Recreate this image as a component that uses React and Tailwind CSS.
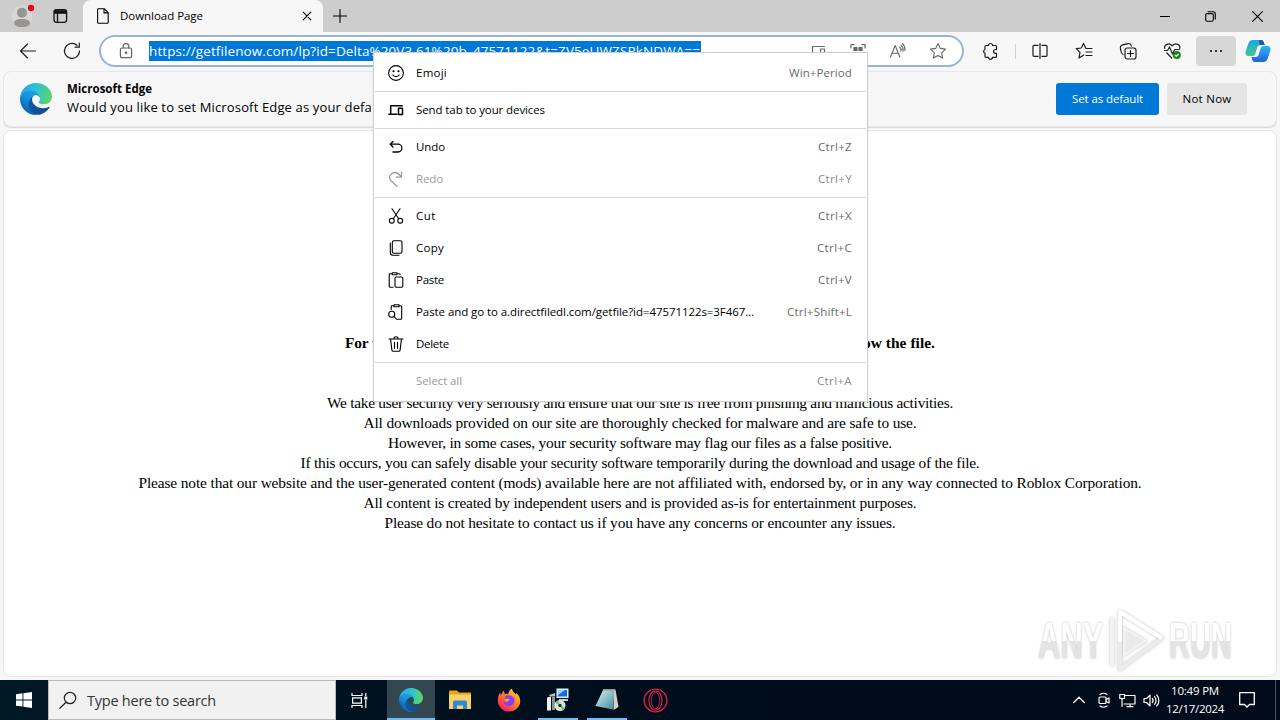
import React, { useLayoutEffect, useRef } from "react";

/* Text that is tracked so that it fills exactly `w` pixels. */
function Fit({ w, className = "", children }) {
  const ref = useRef(null);
  useLayoutEffect(() => {
    const el = ref.current;
    el.style.letterSpacing = "0px";
    const n = el.textContent.length;
    const natural = el.getBoundingClientRect().width;
    el.style.letterSpacing = `${(w - natural) / n}px`;
  }, [w]);
  return (
    <span ref={ref} className={`inline-block whitespace-pre ${className}`}>
      {children}
    </span>
  );
}

function Icon({ size = 16, sw = 1.1, className = "", children, box = 16 }) {
  return (
    <svg
      width={size}
      height={size}
      viewBox={`0 0 ${box} ${box}`}
      fill="none"
      stroke="currentColor"
      strokeWidth={sw}
      strokeLinecap="round"
      strokeLinejoin="round"
      className={`shrink-0 ${className}`}
    >
      {children}
    </svg>
  );
}

function EdgeLogo({ size, id }) {
  return (
    <svg width={size} height={size} viewBox="0 0 256 256" className="shrink-0">
      <defs>
        <linearGradient id={id + "a"} x1="60" y1="178" x2="235" y2="178" gradientUnits="userSpaceOnUse">
          <stop offset="0" stopColor="#0c59a4" />
          <stop offset="1" stopColor="#114a8b" />
        </linearGradient>
        <linearGradient id={id + "b"} x1="150" y1="100" x2="45" y2="230" gradientUnits="userSpaceOnUse">
          <stop offset="0" stopColor="#1b9de2" />
          <stop offset="0.4" stopColor="#1595df" />
          <stop offset="1" stopColor="#0f5fb0" />
        </linearGradient>
        <linearGradient id={id + "c"} x1="10" y1="60" x2="256" y2="110" gradientUnits="userSpaceOnUse">
          <stop offset="0" stopColor="#27a5e8" />
          <stop offset="0.45" stopColor="#2bc3d2" />
          <stop offset="1" stopColor="#62d65c" />
        </linearGradient>
      </defs>
      <path fill={`url(#${id}a)`} d="M231 190.500a93.700 93.700 0 0 1-10.500 4.700 101.900 101.900 0 0 1-35.900 6.500c-47.300 0-88.500-32.500-88.500-74.300a31.500 31.500 0 0 1 16.400-27.300c-42.800 1.800-53.800 46.400-53.800 72.500 0 73.900 68.100 81.400 82.800 81.400 7.900 0 19.800-2.300 27-4.600l1.300-.4a128.300 128.300 0 0 0 66.600-52.800 4 4 0 0 0-5.400-5.700z" />
      <path fill={`url(#${id}b)`} d="M105.700 241.400a79.200 79.200 0 0 1-22.700-21.300 80.700 80.700 0 0 1 29.500-120c3.100-1.500 8.500-4.100 15.600-4a32.400 32.400 0 0 1 25.700 13 31.900 31.900 0 0 1 6.300 18.700c0-.2 24.500-79.600-80-79.600-43.900 0-80 41.700-80 78.200a130.200 130.200 0 0 0 12.100 56 128 128 0 0 0 156.400 67 75.500 75.500 0 0 1-62.800-8z" />
      <path fill={`url(#${id}c)`} d="M152.300 148.900c-.8 1-3.300 2.500-3.300 5.700 0 2.600 1.700 5.100 4.700 7.200 14.400 10 41.500 8.700 41.600 8.700a59.600 59.600 0 0 0 30.300-8.300 61.400 61.400 0 0 0 30.400-52.900c.3-22.400-8-37.300-11.300-43.900C223.500 23.900 177.700 0 128 0A128 128 0 0 0 0 126.200c.5-36.500 36.800-66 80-66 3.500 0 23.500.3 42 10 16.300 8.600 24.900 19 30.800 29.200 6.200 10.700 7.300 24.100 7.300 29.500s-2.700 13.300-7.800 20z" />
    </svg>
  );
}

const UI = "font-['Open_Sans','Noto_Sans',sans-serif]";

function TitleBar() {
  return (
    <div className="flex h-8 shrink-0 bg-[#cdcdcd] text-black">
      <div className="flex w-[83px] items-center">
        <svg width="48" height="32" viewBox="0 0 48 32">
          <circle cx="22" cy="16" r="10.500" fill="#d8d6d5" />
          <circle cx="22" cy="12.800" r="5" fill="#979593" />
          <path d="M14 24c0-3.500 2-5 8-5s8 1.500 8 5c-2 2.500-5 3-8 3s-6-.5-8-3z" fill="#979593" />
          <circle cx="31" cy="8" r="3.200" fill="#e00b1c" />
        </svg>
        <svg width="24" height="32" viewBox="0 0 24 32" fill="none" stroke="#111" strokeWidth="1.300">
          <rect x="6" y="9.700" width="12.600" height="12.600" rx="2.500" />
          <path d="M6 12h12.600" strokeWidth="3.600" />
          <path d="M9.500 13v9" />
        </svg>
      </div>
      <div className="flex w-60 items-center rounded-t-lg bg-[#f7f7f7] pl-3">
        <Icon size={16} sw={1.1} className="mr-[9px]">
          <path d="M3 .7h6.200l4 4v9.600a1 1 0 0 1-1 1H3.600a1 1 0 0 1-1-1V1.600a1 1 0 0 1 .9-.9zM9 .9v4h4" />
        </Icon>
        <Fit w={83} className="text-[11.500px]">Download Page</Fit>
        <Icon size={10} box={10} sw={1.100} className="ml-[99px]">
          <path d="M1.200 1.200l7.600 7.600M8.800 1.200L1.200 8.800" />
        </Icon>
      </div>
      <div className="flex flex-1 items-center pl-[10px]">
        <Icon size={14} box={14} sw={1.100}>
          <path d="M7 .5v13M.5 7h13" />
        </Icon>
        <div className="flex-1" />
        <Icon size={10} box={10} sw={1} className="mr-[35px]">
          <path d="M0 5.500h10" />
        </Icon>
        <Icon size={11} box={11} sw={1.100} className="mr-[36px]">
          <rect x=".7" y="2.600" width="7.600" height="7.600" rx="1.500" />
          <path d="M3 .7h5a2.300 2.300 0 0 1 2.300 2.300v5" />
        </Icon>
        <Icon size={11} box={11} sw={1.100} className="mr-[17px]">
          <path d="M.6.6l9.800 9.800M10.400.6L.6 10.400" />
        </Icon>
      </div>
    </div>
  );
}

function Toolbar() {
  return (
    <div className="flex h-[38px] shrink-0 items-center bg-[#f7f7f7] text-[#1b1b1b]">
      <Icon size={18} box={18} sw={1.100} className="ml-[19px]">
        <path d="M16.500 9H1.500M8.500 2L1.500 9l7 7" />
      </Icon>
      <Icon size={18} box={18} sw={1.200} className="ml-[26px]">
        <path d="M16.500 9A7.500 7.500 0 1 1 14 3.300M16.300 1v4.200h-4.200" />
      </Icon>
      <div className="ml-[18px] flex h-8 w-[865px] items-center rounded-full border-2 border-[#9bb3da] bg-white text-[#666]">
        <Icon size={16} sw={1.200} className="ml-[17px]">
          <rect x="2.400" y="5" width="11.200" height="9.600" rx="1.600" />
          <path d="M5.200 5V3.400a2.800 2.800 0 0 1 5.600 0V5" />
          <circle cx="8" cy="9.800" r=".7" fill="currentColor" />
        </Icon>
        <span className="ml-[15px] flex h-5 w-[552px] items-center bg-[#0078d7] text-white">
          <Fit w={551} className="text-[13.500px]">https://getfilenow.com/lp?id=Delta%20V3.61%20b_47571122&amp;t=ZV5eUWZSRkNDWA==</Fit>
        </span>
        <Icon size={16} sw={1.200} className="ml-[109px]">
          <path d="M2.500 11V3.500h12M1 12h8M10.500 6h4v7h-4z" />
        </Icon>
        <Icon size={16} sw={1.200} className="ml-6">
          <path d="M1 5V1.700h3M12 1.700h3V5" />
          <path d="M4 4.500h3v3H4zM9 4.500h3v3H9z" fill="currentColor" />
        </Icon>
        <Icon size={18} box={18} sw={1.100} className="ml-[23px]">
          <path d="M1.500 15L6.200 3.500 10.900 15M3.200 11.300h6M10.500 5a4 4 0 0 1 1.500 4M12 3.200a6.500 6.500 0 0 1 2 6M13.500 1.500a9 9 0 0 1 2.500 7" />
        </Icon>
        <Icon size={18} box={18} sw={1.100} className="ml-[22px]">
          <path d="M9 1.500l2.300 4.900 5.200.7-3.800 3.700.9 5.300L9 13.500l-4.600 2.600.9-5.300L1.500 7.100l5.200-.7z" />
        </Icon>
      </div>
      <Icon size={18} box={18} sw={1.200} className="ml-[18px]">
        <path d="M6.500 3.500a2 2 0 0 1 4 0h3a1 1 0 0 1 1 1v3h-1a1.900 1.900 0 0 0 0 3.800h1v3a1 1 0 0 1-1 1h-3a2 2 0 0 1-4 0H4a1 1 0 0 1-1-1v-3a2 2 0 0 1 0-3.800v-3a1 1 0 0 1 1-1z" />
      </Icon>
      <div className="ml-[15px] h-[15px] w-px bg-[#d0d0d0]" />
      <Icon size={16} sw={1.200} className="ml-4">
        <path d="M6 2.300H2.200A1.200 1.200 0 0 0 1 3.500v8.700a1.200 1.200 0 0 0 1.200 1.200H6M10 2.300h3.800A1.200 1.200 0 0 1 15 3.500v8.700a1.200 1.200 0 0 1-1.200 1.200H10M8 .5v15" />
      </Icon>
      <Icon size={18} box={18} sw={1.200} className="ml-[27px]">
        <path d="M8.700 13L4 16l1-5.600-3.700-3.800 5-.6 2.200-4.600 2.100 4.400M11 6.500h6M11 10h6M11 13.500h6" />
      </Icon>
      <Icon size={18} box={18} sw={1.200} className="ml-[26px]">
        <rect x="6" y="6" width="11" height="11" rx="2.200" />
        <path d="M11.500 8.500v6M8.500 11.500h6M4 12.500c-1.500-1-1.800-1.800-2.200-4C1.200 5 1 4 3 3.200l6-1.600c2-.4 3 .6 3.400 2.200" />
      </Icon>
      <svg width="20" height="18" viewBox="0 0 20 18" fill="none" stroke="#222" strokeWidth="1.200" strokeLinejoin="round" className="ml-[26px] shrink-0">
        <path d="M1.800 7C.5 2.500 6 .2 9.200 3.800 12.500.2 18 2.500 16.700 7M3.500 10.500l5.700 6M1 8.500h3.500l2-3.500 3 7 2.200-4.500h5" />
        <circle cx="13.800" cy="13" r="4" fill="#1a8217" stroke="none" />
        <path d="M12 13l1.300 1.300 2.300-2.500" stroke="#fff" />
      </svg>
      <div className="ml-[13px] flex h-[30px] w-10 items-center justify-center gap-[3px] rounded bg-[#d7d7d7]">
        <i className="size-[2px] rounded-full bg-black" />
        <i className="size-[2px] rounded-full bg-black" />
        <i className="size-[2px] rounded-full bg-black" />
      </div>
      <svg width="26" height="24" viewBox="0 0 26 24" className="ml-[9px] shrink-0">
        <defs>
          <linearGradient id="cpa" x1="0" y1="0" x2="0" y2="1">
            <stop offset="0" stopColor="#1aa6e4" />
            <stop offset="1" stopColor="#43c78d" />
          </linearGradient>
          <linearGradient id="cpb" x1="0" y1="0" x2="0" y2="1">
            <stop offset="0" stopColor="#2bb6f5" />
            <stop offset="1" stopColor="#2360dc" />
          </linearGradient>
        </defs>
        <path d="M8 1h8c2 0 3 2 3.600 5h-4c-2 0-3 1-3.500 3l-1.500 5c-.6 2-1.500 3-3 3H4c-3 0-4-2-3.200-5L3.500 4C4.300 2 5.700 1 8 1z" fill="url(#cpa)" />
        <path d="M14 1h2c2 0 3 2 3.600 5h-5z" fill="#1758b8" />
        <path d="M18 23h-8c-2 0-3-2-3.500-5h3.900c2 0 3-1 3.500-3l1.500-5c.6-2 1.500-3 3-3H22c3 0 4 2 3.200 5l-2.700 8c-.8 2-2.200 3-4.500 3z" fill="url(#cpb)" />
      </svg>
    </div>
  );
}

function InfoBar() {
  return (
    <div className="mx-[3px] mt-px flex h-14 shrink-0 items-center rounded-lg border border-[#e8e8e8] bg-[#f7f7f7] shadow-[0_1px_1px_rgba(0,0,0,0.12)]">
      <span className="ml-4">
        <EdgeLogo size={32} id="e1" />
      </span>
      <div className="ml-[15px] flex flex-col items-start pb-[3px]">
        <Fit w={85} className="text-[11.500px] leading-[19px] font-bold">Microsoft Edge</Fit>
        <Fit w={305} className="text-[13px] leading-[19px]">Would you like to set Microsoft Edge as your defa</Fit>
      </div>
      <div className="flex-1" />
      <div className="mr-2 flex h-8 w-[103px] items-center justify-center rounded-[3px] bg-[#0078d7] text-white">
        <Fit w={71} className="text-[11.500px]">Set as default</Fit>
      </div>
      <div className="mr-[29px] flex h-8 w-20 items-center justify-center rounded-[3px] bg-[#e5e5e5]">
        <Fit w={49} className="text-[11.500px]">Not Now</Fit>
      </div>
    </div>
  );
}

const lines = [
  [626, "We take user security very seriously and ensure that our site is free from phishing and malicious activities."],
  [553, "All downloads provided on our site are thoroughly checked for malware and are safe to use."],
  [504, "However, in some cases, your security software may flag our files as a false positive."],
  [679, "If this occurs, you can safely disable your security software temporarily during the download and usage of the file."],
  [1003, "Please note that our website and the user-generated content (mods) available here are not affiliated with, endorsed by, or in any way connected to Roblox Corporation."],
  [553, "All content is created by independent users and is provided as-is for entertainment purposes."],
  [511, "Please do not hesitate to contact us if you have any concerns or encounter any issues."],
];

function Page() {
  return (
    <div className="mx-[3px] mt-[3px] mb-[3px] flex flex-1 flex-col items-center rounded-lg border border-[#e6e6e6] bg-white pt-[202px] font-['Liberation_Serif',serif] text-[15.400px] leading-5 text-black">
      <div className="mb-10 flex w-[590px] justify-between font-bold">
        <Fit w={32}>For t</Fit>
        <Fit w={72}>ow the file.</Fit>
      </div>
      {lines.map(([w, t]) => (
        <Fit key={t} w={w}>{t}</Fit>
      ))}
    </div>
  );
}

const glyphs = {
  emoji: (
    <Icon>
      <circle cx="8" cy="8" r="7.400" />
      <circle cx="5.500" cy="6.300" r=".5" fill="currentColor" />
      <circle cx="10.500" cy="6.300" r=".5" fill="currentColor" />
      <path d="M4.700 10a4.200 4.200 0 0 0 6.600 0" />
    </Icon>
  ),
  send: (
    <Icon sw={1.500}>
      <path d="M2.700 11V3.800h11.500M.8 12.300h8M10.500 6.300h4v6.200h-4z" />
    </Icon>
  ),
  undo: (
    <Icon sw={1.300}>
      <path d="M5 2.500L2.200 5.200 5 8M2.500 5.200H10a3.900 3.900 0 0 1 0 7.800H5" />
    </Icon>
  ),
  redo: (
    <Icon sw={1.200}>
      <path d="M13.500.8v5.400H8M13.300 6C10.500 1.800 7 .5 4 2.500c-3.300 2.500-3 5.500-.5 7.800l5.500 5" />
    </Icon>
  ),
  cut: (
    <Icon>
      <path d="M4 .8l6.700 10M12 .8l-6.700 10" />
      <circle cx="3.800" cy="12.700" r="2.400" />
      <circle cx="12.200" cy="12.700" r="2.400" />
    </Icon>
  ),
  copy: (
    <Icon>
      <rect x="4.300" y=".7" width="9.700" height="12.600" rx="1.800" />
      <path d="M2.300 3v9.500a2.800 2.800 0 0 0 2.800 2.800H11" />
    </Icon>
  ),
  paste: (
    <Icon>
      <path d="M5 15.300H2.200a1 1 0 0 1-1-1V2.700a1 1 0 0 1 1-1H4M9 1.700h2.200a1 1 0 0 1 1 1M4.300.7h4.600v2H4.300z" />
      <rect x="7" y="5" width="7.800" height="10.300" rx="1.200" />
    </Icon>
  ),
  go: (
    <Icon>
      <path d="M3.200 5.500V2.700a1 1 0 0 1 1-1H5.700M11 1.700h1.700a1 1 0 0 1 1 1v11.600a1 1 0 0 1-1 1H9.500M6 .7h5v2H6z" />
      <circle cx="3.700" cy="10.200" r="3" />
      <path d="M6 12.500l2.500 2.700" />
    </Icon>
  ),
  del: (
    <Icon>
      <path d="M1 3h14M5.800 3a2.200 2.200 0 0 1 4.400 0M2.600 3.200l1.300 10.900a1.400 1.400 0 0 0 1.400 1.200h5.400a1.400 1.400 0 0 0 1.400-1.200l1.300-10.900M6.500 6.200v6M9.500 6.200v6" />
    </Icon>
  ),
};

const groups = [
  [["emoji", "Emoji", 31, "Win+Period", 63]],
  [["send", "Send tab to your devices", 129]],
  [
    ["undo", "Undo", 29, "Ctrl+Z", 34],
    ["redo", "Redo", 27, "Ctrl+Y", 34, true],
  ],
  [
    ["cut", "Cut", 20, "Ctrl+X", 34],
    ["copy", "Copy", 28, "Ctrl+C", 35],
    ["paste", "Paste", 28, "Ctrl+V", 34],
    ["go", "Paste and go to a.directfiledl.com/getfile?id=47571122s=3F467...", 338, "Ctrl+Shift+L", 65],
    ["del", "Delete", 33],
  ],
  [[null, "Select all", 46, "Ctrl+A", 35, true]],
];

function Menu() {
  return (
    <div className="absolute top-[52px] left-[373px] flex w-[495px] flex-col border border-[#cfcfcf] bg-white py-1 text-[11.500px] text-black shadow-[0_1px_2px_rgba(0,0,0,0.08)]">
      {groups.map((g, i) => (
        <React.Fragment key={i}>
          {i > 0 && <div className="mx-px my-[2px] h-px bg-[#d6d6d6]" />}
          {g.map(([icon, label, w, key, kw, off]) => (
            <div key={label} className={`flex h-8 items-center pr-[15px] pl-[14px] ${off ? "text-[#9a9a9a]" : ""}`}>
              <span className="mr-3 size-4">{glyphs[icon]}</span>
              <Fit w={w}>{label}</Fit>
              <span className="flex-1" />
              {key && <Fit w={kw} className={off ? "text-[#8a8a8a]" : "text-[#6a6a6a]"}>{key}</Fit>}
            </div>
          ))}
        </React.Fragment>
      ))}
    </div>
  );
}

function Watermark() {
  const word = "text-[50px] leading-[60px] font-['Liberation_Sans',sans-serif] font-bold bg-gradient-to-b from-white from-50% to-[#e4e4e4] to-50% bg-clip-text text-transparent drop-shadow-[0_0_1.500px_rgba(0,0,0,0.25)] inline-block";
  return (
    <div className="absolute top-[608px] left-[1038px] flex h-[66px] w-[196px] items-center">
      <span className="flex w-[68px] overflow-visible">
        <span className={`${word} origin-left scale-x-[0.62]`}>ANY</span>
      </span>
      <svg width="60" height="66" viewBox="0 0 60 66" fill="none" strokeLinejoin="round" className="shrink-0 drop-shadow-[0_0_1.500px_rgba(0,0,0,0.25)]">
        <path d="M14 4L56 30 14 61z" stroke="#ececec" strokeWidth="4" />
        <path d="M14 34V4L56 30" stroke="#fff" strokeWidth="4" />
        <path d="M6 10v48" stroke="#f4f4f4" strokeWidth="4" />
        <path d="M18 20v27l22-14z" fill="#ebebeb" stroke="#f4f4f4" strokeWidth="2" />
      </svg>
      <span className="ml-[3px] w-[64px] overflow-visible">
        <span className={`${word} origin-left scale-x-[0.58]`}>RUN</span>
      </span>
    </div>
  );
}

function Taskbar() {
  return (
    <div className="flex h-10 shrink-0 bg-gradient-to-r from-[#001823] via-[#000d1c] to-[#000a1a] text-white">
      <div className="flex w-12 items-center justify-center">
        <svg width="16" height="16" viewBox="0 0 16 16" fill="#fff">
          <path d="M0 2.200L6.500 1.300v6.200H0zM7.400 1.200L16 0v7.500H7.400zM0 8.400h6.500v6.200L0 13.700zM7.400 8.400H16V16l-8.600-1.200z" />
        </svg>
      </div>
      <div className="flex w-72 items-center border border-[#b9babb] bg-[#f1f1f1] text-[#333]">
        <Icon size={18} box={18} sw={1.200} className="ml-[10px] text-[#222]">
          <circle cx="11" cy="7" r="5.700" />
          <path d="M7 11.200L.8 17.300" />
        </Icon>
        <Fit w={129} className="ml-[10px] pt-px text-[14.500px]">Type here to search</Fit>
      </div>
      <div className="flex w-[50px] items-center pl-[15px]">
        <svg width="17" height="17" viewBox="0 0 17 17" fill="none" stroke="#fff" strokeWidth="1.200">
          <path d="M1 1v2.500h10V1M1 16v-2.500h10V16M1.600 5.800h8.800v5.400H1.600zM14.800 1v3M14.800 8v8" />
          <path d="M13.300 4.500h3v3h-3z" fill="#fff" stroke="none" />
        </svg>
      </div>
      <div className="ml-px flex w-12 items-center justify-center border-b-2 border-[#76b9ed] bg-[#32474f] pt-[2px]">
        <EdgeLogo size={24} id="e2" />
      </div>
      <div className="flex w-[49px] items-center justify-center">
        <svg width="22" height="20" viewBox="0 0 22 20">
          <path d="M0 2c0-1 .5-1.500 1.500-1.500H8L10 2.500h12V6H0z" fill="#e8a317" />
          <path d="M0 4.500h22V19H0z" fill="#f9d06a" />
          <path d="M4 19v-6.500C4 11 5 10.500 6 10.500h10c1 0 2 .5 2 2V19h-4v-3.500H8V19z" fill="#3289d3" />
        </svg>
      </div>
      <div className="flex w-[49px] items-center justify-center">
        <svg width="24" height="24" viewBox="0 0 24 24">
          <defs>
            <linearGradient id="ff" x1="1" y1="0" x2=".2" y2="1">
              <stop offset="0" stopColor="#ffe04a" />
              <stop offset=".45" stopColor="#ff8a1f" />
              <stop offset="1" stopColor="#f5156c" />
            </linearGradient>
          </defs>
          <path d="M12 23.500C5.500 23.500.8 18.500.8 12.500c0-3.500 1-6 2.400-8l.6 2.800C4.700 5.500 6 4.500 6 2.500c1 1 1.500 2 1.700 3.500 1.500-.3 2.300-.2 3.500.3C11.500 3.500 13 1.500 15 .5c.2 3 2.500 4 4 6l.5-1.500c2.500 2 3.700 5 3.700 8 0 6-4.700 10.500-11.200 10.500z" fill="url(#ff)" />
          <path d="M8 8c3-1.500 9-.5 9.500 4 .3 3.500-2.500 6-5.500 6-3.500 0-5.500-2.500-5.500-4.500 1.500 1 3.500.8 4.500-.5L8 11.500z" fill="#8a3ff0" />
          <path d="M8 11.500c1.500-1.200 4-1 5 .5-1.500 0-2 1.500-4 1.500z" fill="#ffb02e" />
        </svg>
      </div>
      <div className="flex w-[49px] flex-col items-center">
        <svg width="24" height="38" viewBox="0 0 24 38" className="ml-px">
          <rect x="10.500" y="8.500" width="12" height="9.500" fill="#e8eef5" />
          <rect x="12" y="10" width="9" height="6.500" fill="#0d6ee0" />
          <path d="M12 10h7l-7 5z" fill="#8fd6ff" />
          <path d="M13 19h9v2h-9z" fill="#c8ccd2" />
          <path d="M1 17.500l4-1v14H1z" fill="#f1f1f1" />
          <path d="M6 17h3v13H6z" fill="#8c9194" />
          <path d="M3 15l6-2v3.500H4z" fill="#b9bdc1" />
          <circle cx="14" cy="25.500" r="5.500" fill="#d7e6d5" />
          <path d="M14 25.500L9 22.500a6 6 0 0 1 3-2.300zM14 25.500l5 2a6 6 0 0 1-2.700 3z" fill="#79b889" />
          <circle cx="14" cy="25.500" r="1.700" fill="#1c2b34" />
        </svg>
        <div className="h-[2px] w-10 bg-[#76b9ed]" />
      </div>
      <div className="flex w-[49px] flex-col items-center">
        <svg width="24" height="38" viewBox="0 0 24 38">
          <defs>
            <linearGradient id="np" x1="0" y1="0" x2="1" y2="1">
              <stop offset="0" stopColor="#d9f1f3" />
              <stop offset="1" stopColor="#3f8b9a" />
            </linearGradient>
          </defs>
          <path d="M19 9.500h1.500L23.500 27l-5 3z" fill="#d5d0c2" />
          <path d="M8 10h11.500L18 29.500.5 26z" fill="url(#np)" />
          <path d="M8 9h12v1.500H8z" fill="#8d9ba0" />
        </svg>
        <div className="h-[2px] w-10 bg-[#76b9ed]" />
      </div>
      <div className="flex w-[49px] items-center justify-center">
        <svg width="25" height="25" viewBox="0 0 25 25" fill="none" stroke="#d41f46">
          <circle cx="12.500" cy="12.500" r="11.400" strokeWidth="1.400" />
          <ellipse cx="12.500" cy="12.500" rx="6.500" ry="9.700" strokeWidth="1.200" />
          <ellipse cx="12.500" cy="12.500" rx="4.200" ry="8.200" strokeWidth=".9" />
        </svg>
      </div>
      <div className="flex-1" />
      <div className="flex items-center">
        <Icon size={12} box={12} sw={1.300}>
          <path d="M.7 8.500L6 3.200l5.300 5.300" />
        </Icon>
        <Icon size={16} sw={1.200} className="ml-[11px]">
          <rect x="3" y="5" width="7" height="6.500" rx="1" />
          <path d="M10 7.500l3-1.500v5l-3-1.500M4 2.500a6 6 0 0 1 7 0M4 14a6 6 0 0 0 7 0" />
        </Icon>
        <Icon size={17} box={17} sw={1.200} className="ml-[7px]">
          <path d="M6 3.500h10v8.500H5M.8 2.500h4.700v4H.8zM3 6.500v8M8 14.700h6M11 12v2.700" />
        </Icon>
        <Icon size={17} box={17} sw={1.200} className="ml-[7px]">
          <path d="M1 6.500v4h2.500L7 13.800V3.200L3.500 6.500zM9.300 6.500a3 3 0 0 1 0 4M11.500 4.700a5.500 5.500 0 0 1 0 7.600M13.700 3a8 8 0 0 1 0 11" />
        </Icon>
        <div className="ml-[6px] flex w-[58px] flex-col items-center">
          <Fit w={48} className="text-[11.500px] leading-[18px]">10:49 PM</Fit>
          <Fit w={58} className="text-[11.500px] leading-[18px]">12/17/2024</Fit>
        </div>
        <Icon size={16} sw={1.300} className="ml-[15px]">
          <path d="M.7.700h14.600v11.800h-4.800L8 15l-2.500-2.500H.7z" />
        </Icon>
        <div className="ml-5 h-10 w-px bg-[#4a525d]" />
        <div className="w-1" />
      </div>
    </div>
  );
}

export default function App() {
  return (
    <div className={`relative flex h-[720px] w-[1280px] flex-col overflow-hidden bg-[#f7f7f7] text-black ${UI}`}>
      <TitleBar />
      <Toolbar />
      <InfoBar />
      <Page />
      <Taskbar />
      <Menu />
      <Watermark />
    </div>
  );
}
